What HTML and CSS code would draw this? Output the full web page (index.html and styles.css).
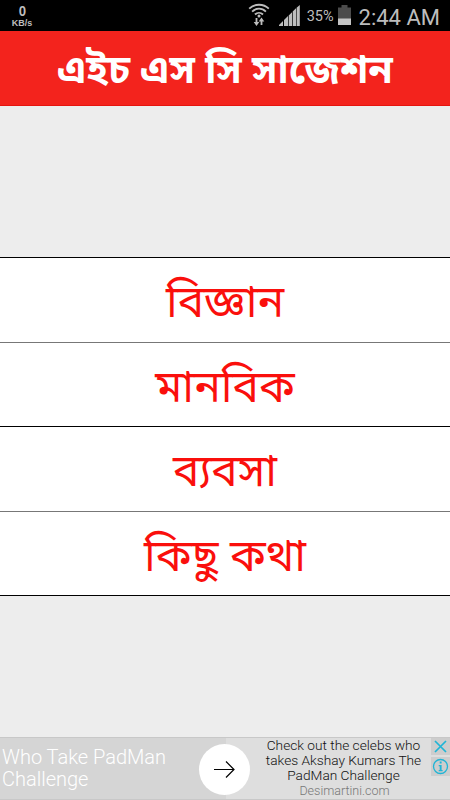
FILE: index.html
```html
<!DOCTYPE html>
<html lang="bn">
<head>
    <meta charset="UTF-8">
    <meta name="viewport" content="width=device-width, initial-scale=1.0">
    <title>এইচ এস সি সাজেশন</title>
    <link rel="stylesheet" href="styles.css">
</head>
<body>
    <div class="container">
        <div class="status-bar">
            <div class="net-speed">
                <span class="speed">0</span>
                <span class="unit">KB/s</span>
            </div>
            <div class="status-icons">
                <svg class="wifi" width="22" height="24" viewBox="0 0 22 24">
                    <g fill="none" stroke="#bdbdbd" stroke-width="1.8">
                        <path d="M1.200 5.700C6.500 .4 15.500 .4 20.800 5.700"/>
                        <path d="M4.100 8.700C8 4.700 14 4.700 17.900 8.700"/>
                        <path d="M7 11.500C9.300 9.200 12.700 9.200 15 11.500"/>
                        <path d="M8.500 15v5M13.500 22v-5"/>
                    </g>
                    <circle cx="11" cy="13" r="1.500" fill="#bdbdbd"/>
                    <path d="M5.700 19h5.600L8.500 23zM10.700 18.500h5.600L13.500 14.500z" fill="#bdbdbd"/>
                </svg>
                <svg class="signal" width="21" height="21" viewBox="0 0 21 21">
                    <path d="M0 21v-1l4-4v5zM5 21v-6l4-4V21zM9.700 21V10.500L13 7.200V21zM13.700 21V6.500L17 3.200V21zM17.600 21V2.700L20.800 0V21z" fill="#bdbdbd"/>
                </svg>
                <span class="percent">35%</span>
                <svg class="battery" width="13" height="20" viewBox="0 0 13 20">
                    <path d="M3.500 0h6v2.500H13V14H0V2.500h3.500z" fill="#4b4b4b"/>
                    <path d="M0 13.500h13V20H0z" fill="#c4c4c4"/>
                </svg>
                <span class="clock">2:44 AM</span>
            </div>
        </div>

        <div class="header">
            <h1>এইচ এস সি সাজেশন</h1>
        </div>

        <div class="menu">
            <div class="menu-item">বিজ্ঞান</div>
            <div class="menu-item">মানবিক</div>
            <div class="menu-item">ব্যবসা</div>
            <div class="menu-item">কিছু কথা</div>
        </div>

        <div class="ad">
            <div class="ad-title">Who Take PadMan<br>Challenge</div>
            <div class="ad-info">
                <p>Check out the celebs who<br>takes Akshay Kumars The<br>PadMan Challenge</p>
                <p class="ad-site">Desimartini.com</p>
            </div>
            <div class="ad-arrow">
                <svg width="22" height="18" viewBox="0 0 22 18">
                    <path d="M0 8.500h20M12 .5l8 8-8 8" fill="none" stroke="#000" stroke-width="1.200"/>
                </svg>
            </div>
            <div class="ad-buttons">
                <div class="ad-btn">
                    <svg width="19" height="17" viewBox="0 0 19 17">
                        <path d="M4 3l11 11M15 3L4 14" fill="none" stroke="#1fb5d6" stroke-width="1.700"/>
                    </svg>
                </div>
                <div class="ad-btn info">
                    <svg width="19" height="19" viewBox="0 0 19 19">
                        <circle cx="9.500" cy="9.500" r="7" fill="none" stroke="#1fb5d6" stroke-width="1.300"/>
                        <path d="M8.700 4.500h1.900v1.900H8.700zM7.700 8h2.900v5h1v1.200H7.700V13h1V9.200h-1z" fill="#1fb5d6"/>
                    </svg>
                </div>
            </div>
        </div>
    </div>
</body>
</html>
```
FILE: styles.css
```css
* {
    box-sizing: border-box;
}

body {
    margin: 0;
    padding: 0;
    font-family: Roboto, sans-serif;
    overflow: hidden;
    background-color: #ededed;
}

.container {
    width: 450px;
    height: 800px;
    display: flex;
    flex-direction: column;
}

.status-bar {
    height: 31px;
    background-color: #000;
    color: #bdbdbd;
    display: flex;
    justify-content: space-between;
}

.net-speed {
    width: 44px;
    padding-top: 3px;
    display: flex;
    flex-direction: column;
    align-items: center;
    font-family: "Liberation Sans", Arial, sans-serif;
    font-weight: bold;
}

.speed {
    font-size: 15.5px;
    line-height: 16px;
    transform: scaleX(0.85);
}

.unit {
    font-size: 9px;
    line-height: 9px;
}

.status-icons {
    display: flex;
    align-items: flex-start;
    padding-right: 10px;
}

.wifi {
    margin: 3px 9px 0 0;
}

.signal {
    margin: 5px 7px 0 0;
}

.percent {
    font-size: 14.5px;
    line-height: 33px;
    margin-right: 4px;
}

.battery {
    margin: 5px 8px 0 0;
}

.clock {
    font-size: 22px;
    line-height: 35px;
}

.header {
    height: 75px;
    padding-top: 10px;
    background-color: #f3231d;
    border-bottom: 1px solid #e5140f;
    display: flex;
    align-items: center;
    justify-content: center;
}

.header h1 {
    margin: 0;
    color: #fff;
    font-family: "Noto Sans Bengali", "Noto Sans", sans-serif;
    font-size: 39.5px;
    line-height: 60px;
    font-weight: bold;
    white-space: nowrap;
}

.menu {
    margin-top: 151px;
    border-top: 1px solid #000;
}

.menu-item {
    height: 84.5px;
    padding-top: 6px;
    background-color: #fff;
    border-bottom: 1px solid #000;
    color: #fa0f0c;
    font-family: "Noto Sans Bengali", "Noto Sans", sans-serif;
    font-size: 44.3px;
    line-height: 84px;
    text-align: center;
}

.menu-item:nth-child(odd) {
    border-bottom-color: #777;
}

.menu-item:nth-child(even) {
    border-bottom-color: #000;
}

.ad {
    position: relative;
    height: 63px;
    margin-top: auto;
    display: flex;
    background-color: #dedede;
    border-top: 1px solid #c8c8c8;
    border-bottom: 1px solid #c8c8c8;
}

.ad-title {
    width: 226px;
    padding: 8px 0 0 2px;
    background-color: #d5d5d5;
    color: #fff;
    font-size: 20px;
    font-weight: 300;
    line-height: 22px;
}

.ad-info {
    width: 205px;
    padding-left: 30px;
    color: #111;
    font-size: 13.7px;
    font-weight: 300;
    line-height: 15px;
    text-align: center;
    white-space: nowrap;
}

.ad-info p {
    margin: 0;
}

.ad-info .ad-site {
    padding-left: 2px;
    color: #777;
    font-size: 12.5px;
}

/* round button over the seam of the two halves */
.ad-arrow {
    position: absolute;
    left: 199px;
    top: 6px;
    width: 51px;
    height: 51px;
    border-radius: 50%;
    background-color: #fff;
    display: flex;
    align-items: center;
    justify-content: center;
}

.ad-buttons {
    width: 19px;
    display: flex;
    flex-direction: column;
    gap: 2px;
}

.ad-btn {
    height: 17px;
    background-color: #cdcdcd;
}

.ad-btn.info {
    height: 19px;
}

.ad-btn svg {
    display: block;
}
```
